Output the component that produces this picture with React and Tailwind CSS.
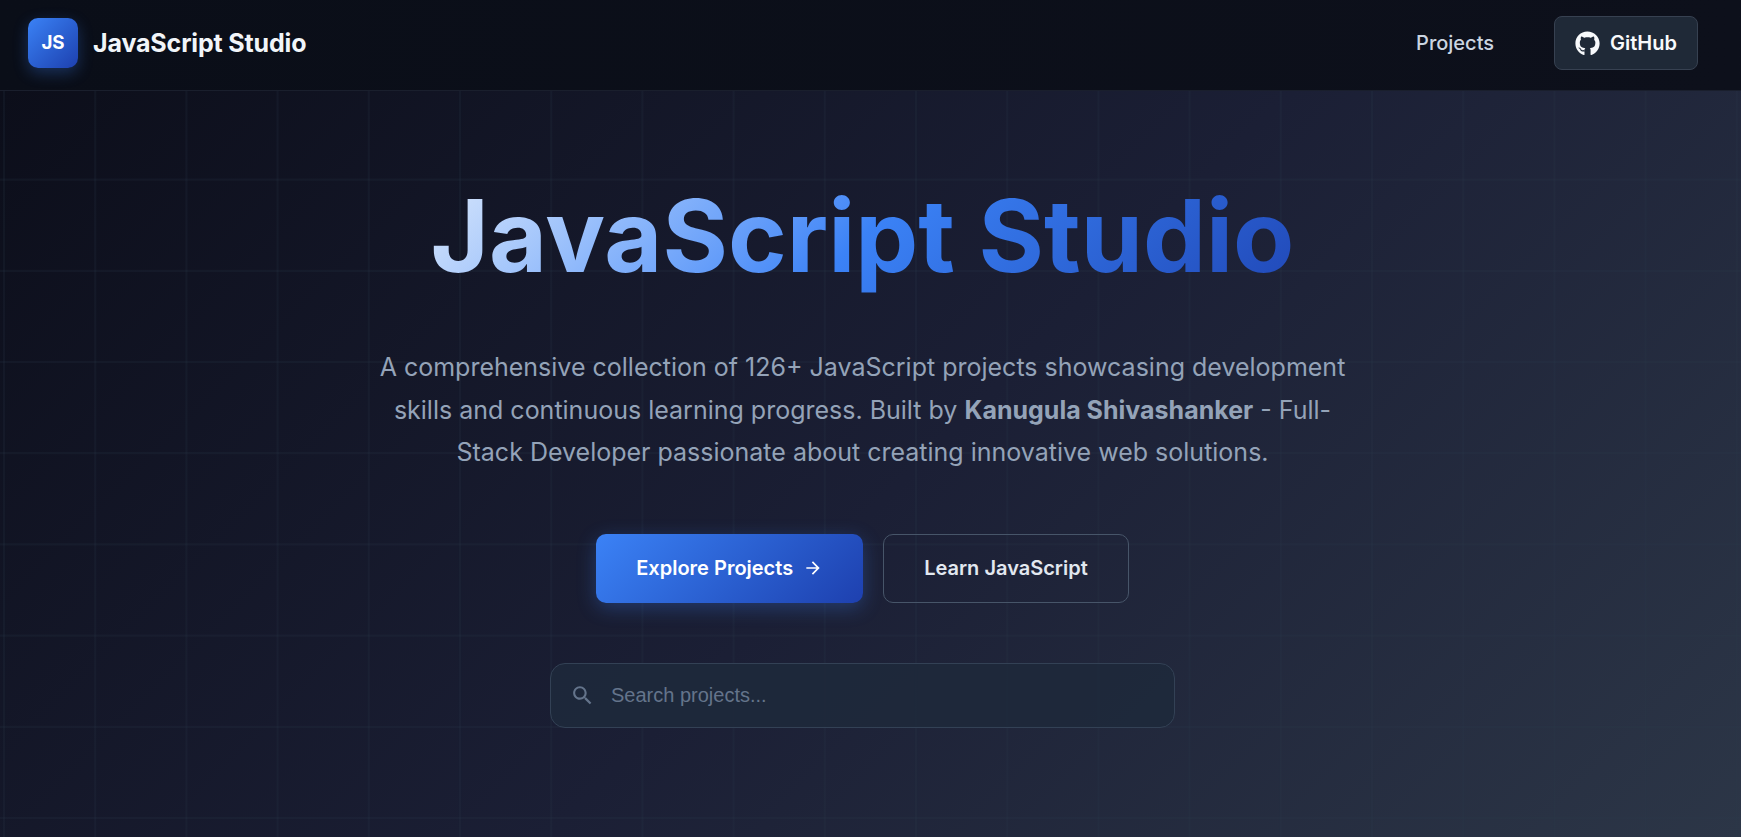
import { FaGithub } from "react-icons/fa";

const columns = Array.from({ length: 20 }, (_, i) => 4 + i * 91.2);
const rows = Array.from({ length: 8 }, (_, i) => 88.4 - 91 + (i + 1) * 91.2);

function GridLines() {
  return (
    <svg className="absolute inset-0 h-full w-full" aria-hidden="true">
      <g stroke="#2b3d4f" strokeOpacity="0.18" strokeWidth="2.2">
        {columns.map((x) => (
          <line key={x} x1={x} x2={x} y1="0" y2="100%" />
        ))}
        {rows.map((y) => (
          <line key={y} x1="0" x2="100%" y1={y} y2={y} />
        ))}
      </g>
    </svg>
  );
}

function Header() {
  return (
    <header className="flex h-[91px] shrink-0 items-center justify-between border-b border-[#1a1f2d] bg-linear-to-r from-[#0a0e18] to-[#0d101b] pb-[4px] pl-7 pr-[43px]">
      <a className="flex items-center gap-[15px]">
        <span className="flex h-[50px] w-[50px] items-center justify-center rounded-[10px] bg-linear-135 from-[#3b82f6] to-[#1e40af] text-[18.75px] font-bold text-white shadow-[0_5px_15px_rgba(59,130,246,0.3)]">
          JS
        </span>
        <span className="pt-[2px] text-[25px] font-bold tracking-[-0.15px] text-[#f1f5f9]">JavaScript Studio</span>
      </a>
      <nav className="flex items-center gap-[60px]">
        <a className="text-[20px] font-medium text-[#cbd5e1]">Projects</a>
        <a className="flex h-[54px] items-center gap-[10px] rounded-[8px] border border-[#374151] bg-[#1f2937] px-5 text-[20px] font-semibold text-[#f8fafc]">
          <FaGithub className="h-[25px] w-[25px]" />
          GitHub
        </a>
      </nav>
    </header>
  );
}

export default function App() {
  return (
    <div className="flex h-[837px] flex-col overflow-hidden font-['Inter',sans-serif]">
      <Header />
      <main className="relative flex-1 bg-[linear-gradient(135deg,#0c0e1a_0%,#1b1f35_52%,#2c3647_100%)]">
        <GridLines />
        <div className="relative flex flex-col items-center pr-4 pt-[85px]">
          <h1 className="w-[1000px] bg-linear-135 from-[#f1f5f9] via-[#3b82f6] to-[#1e40af] bg-clip-text text-center text-[100px] leading-[120px] font-bold text-transparent">
            JavaScript Studio
          </h1>
          <p className="mt-[50px] w-[1000px] text-center text-[25px] leading-[42.5px] text-[#94a3b8]">
            A comprehensive collection of 126+ JavaScript projects showcasing development skills and continuous
            learning progress. Built by <strong className="font-bold">Kanugula Shivashanker</strong> - Full-Stack
            Developer passionate about creating innovative web solutions.
          </p>
          <div className="mt-[60px] flex gap-5">
            <button className="flex h-[69px] items-center gap-[10px] rounded-[10px] bg-linear-135 from-[#3b82f6] to-[#1e40af] px-10 text-[20px] font-semibold text-white shadow-[0_5px_19px_rgba(59,130,246,0.3)]">
              Explore Projects
              <svg className="h-5 w-5" viewBox="0 0 24 24" fill="currentColor">
                <path d="M12 4l-1.41 1.41L16.17 11H4v2h12.17l-5.58 5.59L12 20l8-8z" />
              </svg>
            </button>
            <button className="h-[69px] rounded-[10px] border border-[#475569] px-10 text-[20px] font-semibold text-[#e2e8f0]">
              Learn JavaScript
            </button>
          </div>
          <label className="mt-[60px] flex h-[65px] w-[625px] items-center gap-4 rounded-[15px] border border-[#334155] bg-[#1e293b]/90 pl-[19px]">
            <svg className="h-[25px] w-[25px] text-[#64748b]" viewBox="0 0 24 24" fill="currentColor">
              <path d="M15.5 14h-.79l-.28-.27C15.41 12.59 16 11.11 16 9.5 16 5.91 13.09 3 9.5 3S3 5.91 3 9.5 5.91 16 9.5 16c1.61 0 3.09-.59 4.23-1.57l.27.28v.79l5 4.99L20.49 19l-4.99-5zm-6 0C7.01 14 5 11.99 5 9.5S7.01 5 9.5 5 14 7.01 14 9.5 11.99 14 9.5 14z" />
            </svg>
            <input
              className="min-w-0 flex-1 bg-transparent font-['Liberation_Sans',Arial,sans-serif] text-[20px] outline-none placeholder:text-[#64748b]"
              placeholder="Search projects..."
            />
          </label>
        </div>
      </main>
    </div>
  );
}
